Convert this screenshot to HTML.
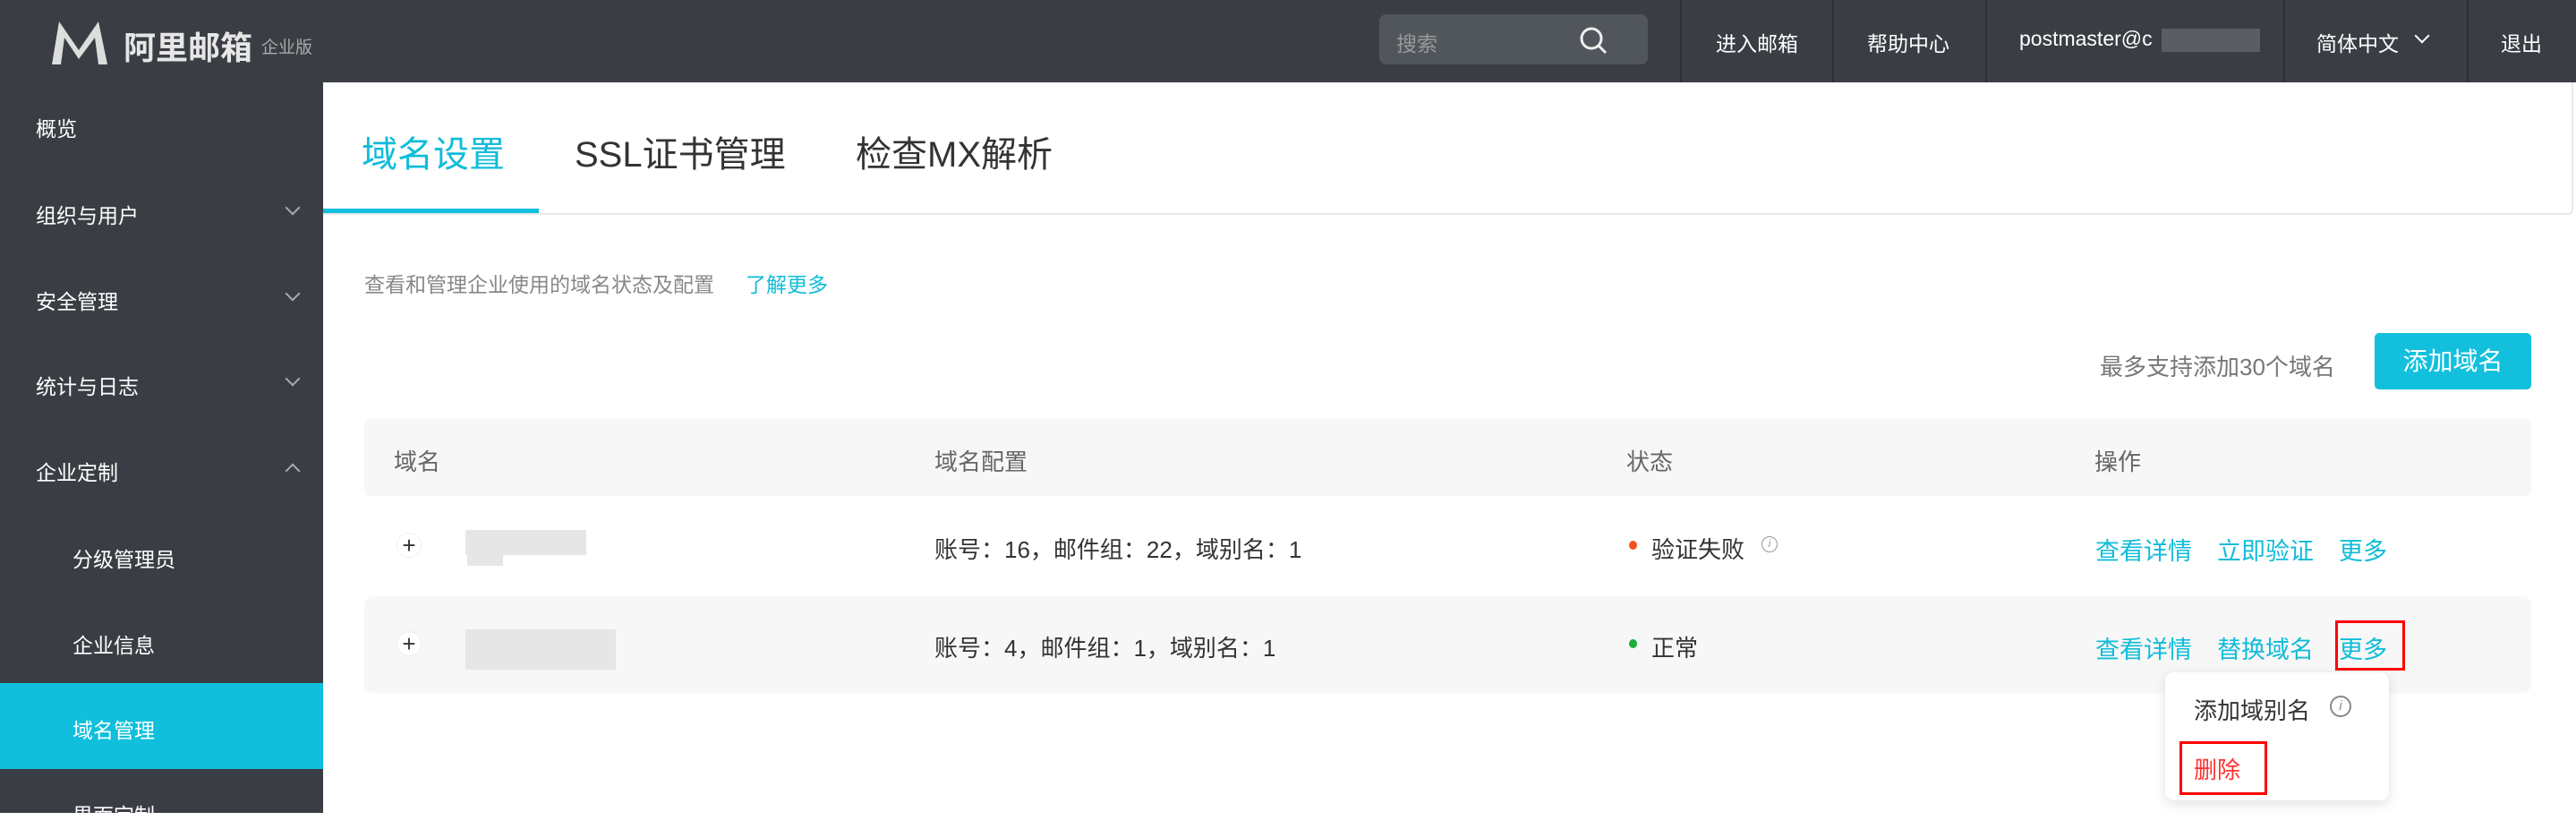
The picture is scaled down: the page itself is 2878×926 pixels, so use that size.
<!DOCTYPE html>
<html><head><meta charset="utf-8"><style>
*{margin:0;padding:0;box-sizing:border-box}
body{width:2878px;height:908px;overflow:hidden;background:#fff;font-family:"Liberation Sans","Noto Sans CJK SC",sans-serif;position:relative}
.a{position:absolute;white-space:nowrap}
.hd{left:0;top:0;width:2878px;height:92px;background:#3a3e44}
.sb{left:0;top:92px;width:361px;height:816px;background:#3a3e44}
.w{color:#fff;font-size:23px}
.sep{top:0;width:2px;height:92px;background:#2c2f34}
.chev{width:12px;height:12px;border-right:2px solid #aaa;border-bottom:2px solid #aaa;transform:rotate(45deg)}
.cy{color:#10bcd9}
.t{font-size:26px;color:#333}
.blur{background:#e6e6e6}
</style></head><body>
<div class="a hd"></div>
<div class="a sb"></div>
<svg class="a" style="left:54px;top:20px" width="72" height="54" viewBox="0 0 72 54"><path d="M4 52 L12 4 L34 36 L56 4 L66 52 L56 52 L52 22 L34 46 L18 22 L14 52Z" fill="#ddd"/></svg>
<div class="a" style="left:138px;top:25px;font-size:36px;font-weight:bold;color:#e6e6e6">阿里邮箱</div>
<div class="a" style="left:292px;top:38px;font-size:19px;color:#aaa">企业版</div>
<div class="a" style="left:1541px;top:16px;width:300px;height:56px;background:#51565c;border-radius:8px"></div>
<div class="a" style="left:1560px;top:30px;font-size:23px;color:#999">搜索</div>
<svg class="a" style="left:1763px;top:28px" width="34" height="34" viewBox="0 0 34 34"><circle cx="15" cy="15" r="11" fill="none" stroke="#eee" stroke-width="3"/><path d="M23 23 L31 31" stroke="#eee" stroke-width="3"/></svg>
<div class="a sep" style="left:1877px"></div><div class="a sep" style="left:2047px"></div><div class="a sep" style="left:2218px"></div><div class="a sep" style="left:2551px"></div><div class="a sep" style="left:2756px"></div>
<div class="a w" style="left:1917px;top:30px">进入邮箱</div>
<div class="a w" style="left:2086px;top:30px">帮助中心</div>
<div class="a w" style="left:2256px;top:30px">postmaster@c</div>
<div class="a" style="left:2415px;top:32px;width:110px;height:26px;background:#5a5e63"></div>
<div class="a w" style="left:2588px;top:30px">简体中文</div>
<div class="a chev" style="left:2700px;top:34px;border-color:#fff"></div>
<div class="a w" style="left:2794px;top:30px">退出</div>

<div class="a w" style="left:40px;top:125px">概览</div>
<div class="a w" style="left:40px;top:222px">组织与用户</div><div class="a chev" style="left:321px;top:226px"></div>
<div class="a w" style="left:40px;top:318px">安全管理</div><div class="a chev" style="left:321px;top:322px"></div>
<div class="a w" style="left:40px;top:413px">统计与日志</div><div class="a chev" style="left:321px;top:417px"></div>
<div class="a w" style="left:40px;top:509px">企业定制</div><div class="a chev" style="left:321px;top:520px;transform:rotate(225deg)"></div>
<div class="a w" style="left:81px;top:606px">分级管理员</div>
<div class="a w" style="left:81px;top:702px">企业信息</div>
<div class="a" style="left:0;top:763px;width:361px;height:96px;background:#0fbfdc"></div>
<div class="a w" style="left:81px;top:797px">域名管理</div>
<div class="a w" style="left:81px;top:892px">界面定制</div>

<div class="a" style="left:361px;top:92px;width:2514px;height:148px;border:2px solid #e8e8e8;border-top:none;border-left:none;border-radius:0 0 6px 0"></div>
<div class="a cy" style="left:404px;top:140px;font-size:40px">域名设置</div>
<div class="a" style="left:642px;top:140px;font-size:40px;color:#333">SSL证书管理</div>
<div class="a" style="left:956px;top:140px;font-size:40px;color:#333">检查MX解析</div>
<div class="a" style="left:361px;top:233px;width:241px;height:5px;background:#0fbfdc"></div>

<div class="a" style="left:407px;top:299px;font-size:23px;color:#888">查看和管理企业使用的域名状态及配置</div>
<div class="a cy" style="left:833px;top:299px;font-size:23px">了解更多</div>
<div class="a" style="left:2346px;top:390px;font-size:26px;color:#777">最多支持添加30个域名</div>
<div class="a" style="left:2653px;top:372px;width:175px;height:63px;background:#12c0dd;border-radius:5px;color:#fff;font-size:28px;text-align:center;line-height:63px">添加域名</div>

<div class="a" style="left:407px;top:468px;width:2421px;height:86px;background:#f7f7f7;border-radius:6px"></div>
<div class="a" style="left:440px;top:496px;font-size:26px;color:#666">域名</div>
<div class="a" style="left:1044px;top:496px;font-size:26px;color:#666">域名配置</div>
<div class="a" style="left:1817px;top:496px;font-size:26px;color:#666">状态</div>
<div class="a" style="left:2340px;top:496px;font-size:26px;color:#666">操作</div>

<div class="a" style="left:407px;top:666px;width:2421px;height:108px;background:#f7f7f7;border-radius:10px"></div>
<div class="a" style="left:443px;top:595px;width:28px;height:28px;border-radius:50%;background:#fff;border:1px solid #eee;text-align:center;line-height:26px;font-size:26px;color:#333">+</div>
<div class="a" style="left:443px;top:705px;width:28px;height:28px;border-radius:50%;background:#fff;border:1px solid #eee;text-align:center;line-height:26px;font-size:26px;color:#333">+</div>
<div class="a blur" style="left:520px;top:592px;width:135px;height:28px"></div><div class="a blur" style="left:522px;top:614px;width:40px;height:18px"></div>
<div class="a blur" style="left:520px;top:703px;width:168px;height:45px"></div>

<div class="a t" style="left:1044px;top:594px">账号：16，邮件组：22，域别名：1</div>
<div class="a t" style="left:1044px;top:704px">账号：4，邮件组：1，域别名：1</div>
<div class="a" style="left:1820px;top:604px;width:9px;height:10px;border-radius:50%;background:#f4511e"></div>
<div class="a t" style="left:1845px;top:594px">验证失败</div>
<div class="a" style="left:1968px;top:599px;width:18px;height:18px;border-radius:50%;border:1.5px solid #999;font-size:12px;color:#999;text-align:center;line-height:15px;font-style:italic">i</div>
<div class="a" style="left:1820px;top:714px;width:9px;height:10px;border-radius:50%;background:#1aad3a"></div>
<div class="a t" style="left:1845px;top:704px">正常</div>

<div class="a cy" style="left:2341px;top:594px;font-size:27px">查看详情</div>
<div class="a cy" style="left:2477px;top:594px;font-size:27px">立即验证</div>
<div class="a cy" style="left:2613px;top:594px;font-size:27px">更多</div>
<div class="a cy" style="left:2341px;top:704px;font-size:27px">查看详情</div>
<div class="a cy" style="left:2477px;top:704px;font-size:27px">替换域名</div>
<div class="a cy" style="left:2613px;top:704px;font-size:27px">更多</div>
<div class="a" style="left:2609px;top:693px;width:78px;height:56px;border:3px solid #f00"></div>

<div class="a" style="left:2419px;top:751px;width:250px;height:143px;background:#fff;border-radius:10px;box-shadow:0 4px 14px rgba(0,0,0,.12)"></div>
<div class="a t" style="left:2451px;top:774px">添加域别名</div>
<div class="a" style="left:2603px;top:777px;width:24px;height:24px;border-radius:50%;border:2px solid #888;font-size:15px;color:#888;text-align:center;line-height:20px;font-style:italic">i</div>
<div class="a" style="left:2435px;top:828px;width:98px;height:60px;border:3px solid #f00"></div>
<div class="a" style="left:2451px;top:840px;font-size:26px;color:#f33">删除</div>
</body></html>
